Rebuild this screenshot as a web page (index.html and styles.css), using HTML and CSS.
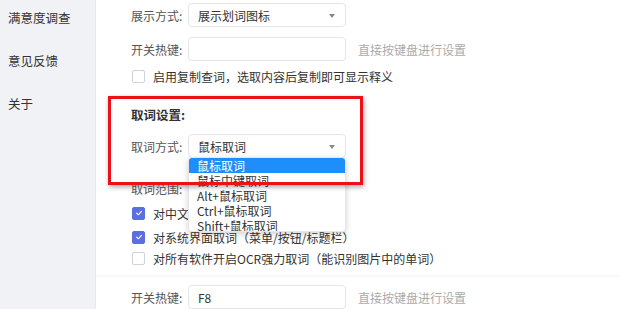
FILE: index.html
```html
<!DOCTYPE html>
<html lang="zh">
<head>
<meta charset="utf-8">
<link rel="stylesheet" href="styles.css">
</head>
<body>
<div class="app">
  <nav class="sidebar">
    <div class="nav-item nav-first">满意度调查</div>
    <div class="nav-item">意见反馈</div>
    <div class="nav-item">关于</div>
  </nav>
  <main class="main">
    <div class="row row-1">
      <span class="label">展示方式:</span>
      <div class="select"><span>展示划词图标</span><i class="arrow"></i></div>
    </div>
    <div class="row row-2">
      <span class="label">开关热键:</span>
      <div class="input"></div>
      <span class="hint">直接按键盘进行设置</span>
    </div>
    <div class="check-row check-first">
      <span class="cb"></span><span>启用复制查词，选取内容后复制即可显示释义</span>
    </div>

    <div class="title">取词设置:</div>
    <div class="row row-mode">
      <span class="label">取词方式:</span>
      <div class="select"><span>鼠标取词</span><i class="arrow"></i></div>
    </div>
    <div class="range-label">取词范围:</div>
    <div class="check-row check-a">
      <span class="cb cb-on"><svg viewBox="0 0 10 10" width="8" height="8"><path d="M2 5.2 L4.2 7.2 L8 3" fill="none" stroke="#fff" stroke-width="1.4" stroke-linecap="round" stroke-linejoin="round"/></svg></span><span>对中文取词</span>
    </div>
    <div class="check-row check-b">
      <span class="cb cb-on"><svg viewBox="0 0 10 10" width="8" height="8"><path d="M2 5.2 L4.2 7.2 L8 3" fill="none" stroke="#fff" stroke-width="1.4" stroke-linecap="round" stroke-linejoin="round"/></svg></span><span>对系统界面取词（菜单/按钮/标题栏）</span>
    </div>
    <div class="check-row check-c">
      <span class="cb"></span><span>对所有软件开启OCR强力取词（能识别图片中的单词）</span>
    </div>
    <div class="divider"></div>
    <div class="row row-last">
      <span class="label">开关热键:</span>
      <div class="input"><span>F8</span></div>
      <span class="hint">直接按键盘进行设置</span>
    </div>

    <ul class="dropdown">
      <li class="opt opt-active">鼠标取词</li>
      <li class="opt">鼠标中键取词</li>
      <li class="opt">Alt+鼠标取词</li>
      <li class="opt">Ctrl+鼠标取词</li>
      <li class="opt">Shift+鼠标取词</li>
    </ul>
    <div class="highlight"></div>
  </main>
</div>
</body>
</html>
```

FILE: styles.css
```css
* { box-sizing: border-box; }
html, body { margin: 0; padding: 0; }
body {
  width: 620px;
  height: 309px;
  overflow: hidden;
  background: #fff;
  font-family: "Noto Sans CJK SC", "Noto Sans", sans-serif;
  font-size: 12px;
  color: #333;
}
.app { display: flex; height: 309px; }
.sidebar {
  width: 96px;
  flex: none;
  background: #f1f2f6;
  border-right: 1px solid #e8e9ee;
  display: flex;
  flex-direction: column;
  padding-left: 8px;
}
.nav-item {
  font-size: 12.5px;
  color: #333;
  height: 18px;
  line-height: 18px;
  margin-top: 25px;
}
.nav-first { margin-top: 9px; }
.main {
  position: relative;
  flex: 1;
  padding-left: 35px;
  display: flex;
  flex-direction: column;
}
.row { display: flex; align-items: center; height: 24px; }
.row-1 { margin-top: 3px; }
.row-2 { margin-top: 10px; }
.label { width: 57px; color: #555; flex: none; }
.select, .input {
  width: 158px;
  height: 24px;
  border: 1px solid #e3e5ea;
  border-radius: 4px;
  background: #fff;
  display: flex;
  align-items: center;
  padding-left: 9px;
  position: relative;
  color: #333;
}
.arrow {
  position: absolute;
  right: 10px;
  top: 10px;
  width: 0; height: 0;
  border-left: 3.5px solid transparent;
  border-right: 3.5px solid transparent;
  border-top: 4px solid #888;
}
.hint { margin-left: 12px; color: #aaa; }
.check-row { display: flex; align-items: center; height: 16px; margin-left: 1px; }
.check-row .cb { margin-right: 8px; }
.check-first { margin-top: 7px; }
.cb {
  width: 13px; height: 13px;
  border: 1px solid #cfd2d8;
  border-radius: 2px;
  background: #fff;
  display: flex; align-items: center; justify-content: center;
  flex: none;
}
.cb-on { background: #5c6fe2; border-color: #5c6fe2; }
.title {
  margin-top: 22px;
  height: 18px;
  line-height: 18px;
  font-weight: bold;
  font-size: 12.5px;
  color: #333;
}
.row-mode { margin-top: 10px; }
.range-label { margin-top: 23px; height: 16px; line-height: 16px; color: #555; }
.check-a { margin-top: 8px; }
.check-b { margin-top: 8px; }
.check-c { margin-top: 5px; }
.divider {
  margin-top: 8px;
  margin-left: -35px;
  height: 18px;
  background: linear-gradient(#fff, #f7f7f8 50%, #fff);
}
.row-last { margin-top: 7px; }
.dropdown {
  position: absolute;
  left: 92px;
  top: 157px;
  width: 158px;
  height: 75px;
  margin: 0;
  padding: 0;
  list-style: none;
  background: #fff;
  border: 1px solid #e6e7ea;
  border-radius: 4px;
  box-shadow: 0 2px 6px rgba(0,0,0,0.18);
  overflow: hidden;
}
.opt {
  height: 15px;
  line-height: 15px;
  padding-left: 8px;
  color: #333;
}
.opt-active { background: #1e8ffa; color: #fff; }
.highlight {
  position: absolute;
  left: 12px;
  top: 96px;
  width: 255px;
  height: 89px;
  border: 3px solid #ea1118;
  box-shadow: 1px 2px 5px rgba(0,0,0,0.35);
  pointer-events: none;
}
```
